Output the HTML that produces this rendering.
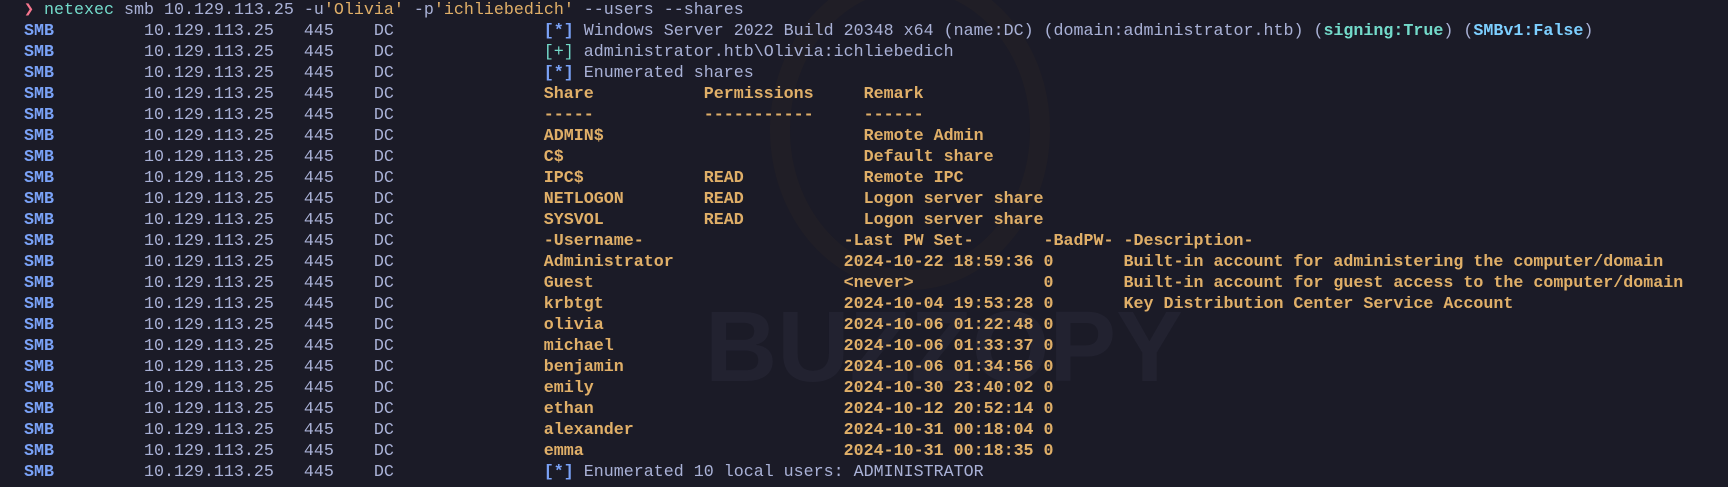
<!DOCTYPE html>
<html><head><meta charset="utf-8"><style>
html,body{margin:0;padding:0;background:#1b1b27;width:1728px;height:487px;overflow:hidden;}
.wm{position:absolute;left:705px;top:290px;font:bold 100px "Liberation Sans",sans-serif;color:#222230;letter-spacing:0px;}
.logo{position:absolute;left:770px;top:-30px;width:240px;height:280px;border-radius:50%;border:20px solid #201e26;}
pre{position:absolute;left:4px;top:0px;margin:0;font-family:"Liberation Mono",monospace;font-size:16.67px;line-height:21px;color:#a9b1d6;}
.b{color:#7aa2f7;font-weight:bold}
.y{color:#e0af68;font-weight:bold}
.yn{color:#e0af68}
.t{color:#73daca}
.tb{color:#73daca;font-weight:bold}
.lb{color:#7dcfff;font-weight:bold}
.r{color:#f7768e}
</style></head><body>
<div class="logo"></div>
<div class="wm">BUZZOPY</div>
<pre>  <span class="r">❯</span> <span class="t">netexec</span> smb 10.129.113.25 -u<span class="yn">'Olivia'</span> -p<span class="yn">'ichliebedich'</span> --users --shares
  <span class="b">SMB</span>         10.129.113.25   445    DC               <span class="b">[*]</span> Windows Server 2022 Build 20348 x64 (name:DC) (domain:administrator.htb) (<span class="tb">signing:True</span>) (<span class="lb">SMBv1:False</span>)
  <span class="b">SMB</span>         10.129.113.25   445    DC               <span class="t">[+]</span> administrator.htb\Olivia:ichliebedich
  <span class="b">SMB</span>         10.129.113.25   445    DC               <span class="b">[*]</span> Enumerated shares
  <span class="b">SMB</span>         10.129.113.25   445    DC               <span class="y">Share           Permissions     Remark</span>
  <span class="b">SMB</span>         10.129.113.25   445    DC               <span class="y">-----           -----------     ------</span>
  <span class="b">SMB</span>         10.129.113.25   445    DC               <span class="y">ADMIN$                          Remote Admin</span>
  <span class="b">SMB</span>         10.129.113.25   445    DC               <span class="y">C$                              Default share</span>
  <span class="b">SMB</span>         10.129.113.25   445    DC               <span class="y">IPC$            READ            Remote IPC</span>
  <span class="b">SMB</span>         10.129.113.25   445    DC               <span class="y">NETLOGON        READ            Logon server share</span>
  <span class="b">SMB</span>         10.129.113.25   445    DC               <span class="y">SYSVOL          READ            Logon server share</span>
  <span class="b">SMB</span>         10.129.113.25   445    DC               <span class="y">-Username-                    -Last PW Set-       -BadPW- -Description-</span>
  <span class="b">SMB</span>         10.129.113.25   445    DC               <span class="y">Administrator                 2024-10-22 18:59:36 0       Built-in account for administering the computer/domain</span>
  <span class="b">SMB</span>         10.129.113.25   445    DC               <span class="y">Guest                         &lt;never&gt;             0       Built-in account for guest access to the computer/domain</span>
  <span class="b">SMB</span>         10.129.113.25   445    DC               <span class="y">krbtgt                        2024-10-04 19:53:28 0       Key Distribution Center Service Account</span>
  <span class="b">SMB</span>         10.129.113.25   445    DC               <span class="y">olivia                        2024-10-06 01:22:48 0</span>
  <span class="b">SMB</span>         10.129.113.25   445    DC               <span class="y">michael                       2024-10-06 01:33:37 0</span>
  <span class="b">SMB</span>         10.129.113.25   445    DC               <span class="y">benjamin                      2024-10-06 01:34:56 0</span>
  <span class="b">SMB</span>         10.129.113.25   445    DC               <span class="y">emily                         2024-10-30 23:40:02 0</span>
  <span class="b">SMB</span>         10.129.113.25   445    DC               <span class="y">ethan                         2024-10-12 20:52:14 0</span>
  <span class="b">SMB</span>         10.129.113.25   445    DC               <span class="y">alexander                     2024-10-31 00:18:04 0</span>
  <span class="b">SMB</span>         10.129.113.25   445    DC               <span class="y">emma                          2024-10-31 00:18:35 0</span>
  <span class="b">SMB</span>         10.129.113.25   445    DC               <span class="b">[*]</span> Enumerated 10 local users: ADMINISTRATOR</pre>
</body></html>
